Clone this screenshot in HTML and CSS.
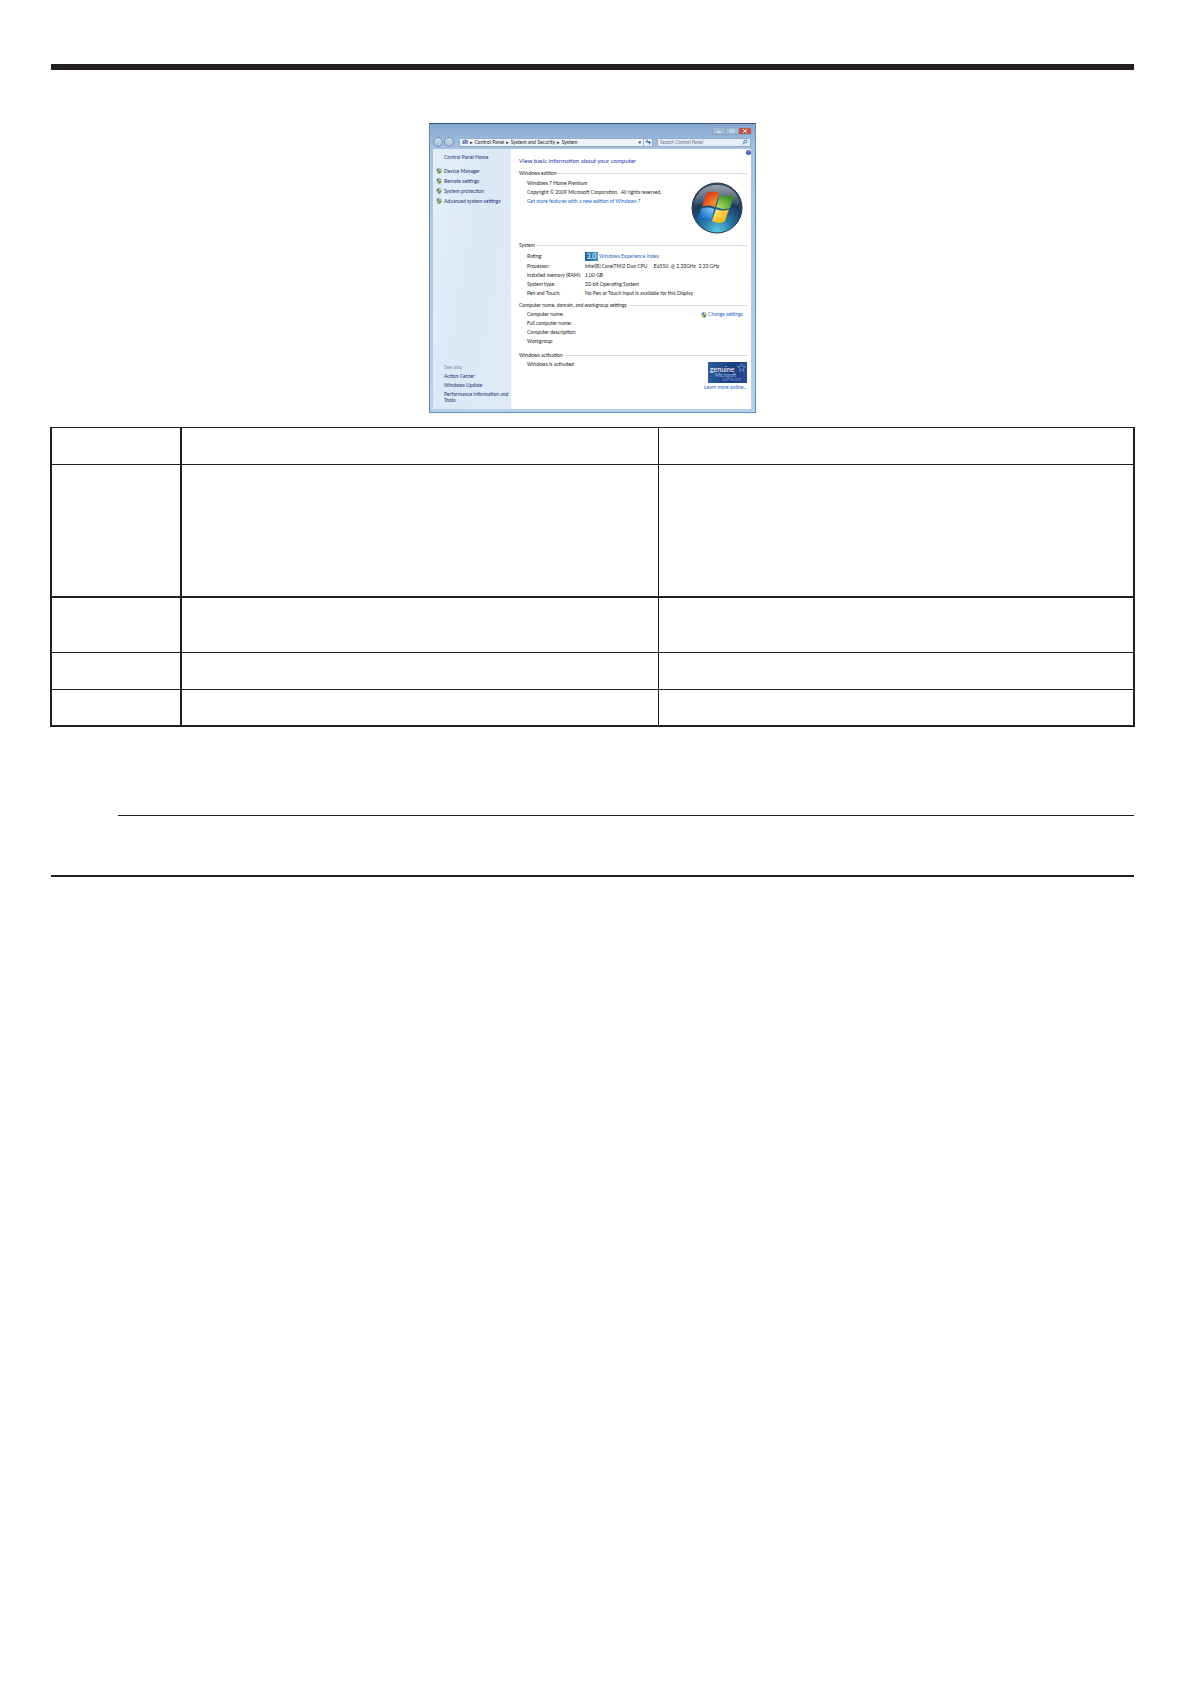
FILE: index.html
```html
<!DOCTYPE html>
<html lang="en">
<head>
<meta charset="utf-8">
<title>System information</title>
<link rel="stylesheet" href="styles.css">
</head>
<body>
<svg class="defs" width="0" height="0" aria-hidden="true">
  <symbol id="shield" viewBox="0 0 12 12">
    <path d="M6 0 11 2v4c0 3-2 5-5 6C3 11 1 9 1 6V2z" fill="#8b9cb0"/>
    <path d="M6 1v5H2V3z" fill="#4c84c8"/><path d="M6 1l4 2v3H6z" fill="#d9cf62"/>
    <path d="M2 6h4v5C3 10 2 8 2 6z" fill="#c6c15a"/><path d="M6 6h4c0 2-1 4-4 5z" fill="#4a8e5a"/>
  </symbol>
</svg>
<main class="page">
  <hr class="rule rule-heavy">
  <section class="window" aria-label="System">
    <div class="titlebar">
      <button class="caption" aria-label="Minimize"><svg viewBox="0 0 12 6"><path d="M4 4h4" stroke="#fff"/></svg></button>
      <button class="caption" aria-label="Maximize"><svg viewBox="0 0 12 6"><path d="M4 2h4v2H4z" fill="none" stroke="#d4e0ee"/></svg></button>
      <button class="caption close" aria-label="Close"><svg viewBox="0 0 12 6"><path d="M4 1l4 4M8 1L4 5" stroke="#f4dcd8"/></svg></button>
    </div>
    <div class="toolbar">
      <button class="nav" aria-label="Back"></button>
      <button class="nav" aria-label="Forward"></button>
      <nav class="address">
        <svg class="pc" viewBox="0 0 12 12"><path d="M1 3l7-2v8l-7 1z" fill="#4c62a0"/><path d="M3 4l4-1v4l-4 1z" fill="#a9c3ea"/><path d="M9 2h2v8H9z" fill="#39437c"/></svg>
        <span class="arrow">▸</span><a href="#">Control Panel</a>
        <span class="arrow">▸</span><a href="#">System and Security</a>
        <span class="arrow">▸</span><a href="#">System</a>
        <span class="drop">▾</span>
        <button class="refresh" aria-label="Refresh"><svg viewBox="0 0 12 12"><path d="M4 1v5M1 4l3 3 3-3M9 11V6M6 8l3-3 3 3" fill="none" stroke="#3268b8" stroke-width="2"/></svg></button>
      </nav>
      <label class="search"><input type="text" placeholder="Search Control Panel" aria-label="Search Control Panel"><svg viewBox="0 0 12 12"><circle cx="7" cy="5" r="3" fill="none" stroke="#3f78b8" stroke-width="2"/><path d="M5 7l-4 4" stroke="#3f78b8" stroke-width="2"/></svg></label>
    </div>
    <div class="body">
      <aside class="side">
        <a class="home" href="#">Control Panel Home</a>
        <ul class="tasks">
          <li><svg><use href="#shield"/></svg><a href="#">Device Manager</a></li>
          <li><svg><use href="#shield"/></svg><a href="#">Remote settings</a></li>
          <li><svg><use href="#shield"/></svg><a href="#">System protection</a></li>
          <li><svg><use href="#shield"/></svg><a href="#">Advanced system settings</a></li>
        </ul>
        <div class="also">
          <span>See also</span>
          <a href="#">Action Center</a>
          <a href="#">Windows Update</a>
          <a class="wrap" href="#">Performance Information and Tools</a>
        </div>
      </aside>
      <div class="content">
        <button class="help" aria-label="Help"><svg viewBox="0 0 12 12"><circle cx="6" cy="6" r="6" fill="#3d51ac"/><path d="M4 5c0-3 4-3 4-1 0 1-2 1-2 3M6 8v2" fill="none" stroke="#dfe6ff" stroke-width="1.5"/></svg></button>
        <h1>View basic information about your computer</h1>
        <section class="group edition">
          <h2>Windows edition</h2>
          <div class="split">
            <div class="lines">
              <p>Windows 7 Home Premium</p>
              <p>Copyright © 2009 Microsoft Corporation.&nbsp; All rights reserved.</p>
              <a href="#">Get more features with a new edition of Windows 7</a>
            </div>
            <svg class="logo" viewBox="0 0 52 52" role="img" aria-label="Windows">
              <defs>
                <radialGradient id="orb" cx=".5" cy=".95" r=".85"><stop offset="0" stop-color="#58c8e0"/><stop offset=".35" stop-color="#2878a4"/><stop offset=".7" stop-color="#1c3c5c"/><stop offset="1" stop-color="#34465c"/></radialGradient>
                <linearGradient id="shine" x2="0" y2="1"><stop offset="0" stop-color="#fff" stop-opacity=".5"/><stop offset="1" stop-color="#fff" stop-opacity=".05"/></linearGradient>
                <radialGradient id="red" cx="1" cy="1" r="1.1"><stop offset="0" stop-color="#ffb43c"/><stop offset="1" stop-color="#dc3c14"/></radialGradient>
                <radialGradient id="green" cx="0" cy="1" r="1.1"><stop offset="0" stop-color="#c8e878"/><stop offset="1" stop-color="#3c9424"/></radialGradient>
                <radialGradient id="blue" cx="1" cy="0" r="1.1"><stop offset="0" stop-color="#90dcff"/><stop offset="1" stop-color="#1668c0"/></radialGradient>
                <radialGradient id="gold" cx="0" cy="0" r="1.1"><stop offset="0" stop-color="#fff08c"/><stop offset="1" stop-color="#f8b814"/></radialGradient>
              </defs>
              <circle cx="26" cy="26" r="25" fill="url(#orb)" stroke="#263a50"/>
              <path d="M3 24C4 10 14 3 26 3s22 7 23 21c-12-5-30-4-46 0z" fill="url(#shine)"/>
              <path d="M15 12c4-3 8-3 13-1l-4 14c-4-2-8-2-13 0z" fill="url(#red)"/>
              <path d="M29 13c5 2 9 2 14 0l-4 13c-5 2-9 1-14-1z" fill="url(#green)"/>
              <path d="M10 27c5-2 9-2 13 0l-3 12c-4-2-8-2-13 0z" fill="url(#blue)"/>
              <path d="M25 27c4 2 9 2 13 0l-4 12c-4 3-8 2-13 0z" fill="url(#gold)"/>
            </svg>
          </div>
        </section>
        <section class="group system">
          <h2>System</h2>
          <dl>
            <dt>Rating:</dt><dd class="rating"><span class="score">3.0</span><a href="#">Windows Experience Index</a></dd>
            <dt>Processor:</dt><dd>Intel(R) Core(TM)2 Duo CPU&nbsp; &nbsp; &nbsp;E6550&nbsp; @ 2.33GHz&nbsp; 2.33 GHz</dd>
            <dt>Installed memory (RAM):</dt><dd>1.00 GB</dd>
            <dt>System type:</dt><dd>32-bit Operating System</dd>
            <dt>Pen and Touch:</dt><dd>No Pen or Touch Input is available for this Display</dd>
          </dl>
        </section>
        <section class="group naming">
          <h2>Computer name, domain, and workgroup settings</h2>
          <div class="split">
            <div class="lines"><p>Computer name:</p><p>Full computer name:</p><p>Computer description:</p><p>Workgroup:</p></div>
            <div class="change"><svg><use href="#shield"/></svg><a href="#">Change settings</a></div>
          </div>
        </section>
        <section class="group">
          <h2>Windows activation</h2>
          <div class="split">
            <div class="lines"><p>Windows is activated</p></div>
            <div class="genuine">
              <div class="badge"><svg viewBox="0 0 12 12"><path d="M6 1l1 3 4 1-3 2 1 4-3-2-3 2 1-4-3-2 4-1z" fill="none" stroke="#7c9cd0"/></svg><b>genuine</b><span>Microsoft</span><span class="dim">software</span></div>
              <a href="#">Learn more online...</a>
            </div>
          </div>
        </section>
      </div>
    </div>
  </section>
  <table class="grid">
    <colgroup><col class="label"><col><col></colgroup>
    <tbody>
      <tr class="short"><td></td><td></td><td></td></tr>
      <tr class="tall"><td></td><td></td><td></td></tr>
      <tr class="medium"><td></td><td></td><td></td></tr>
      <tr class="short"><td></td><td></td><td></td></tr>
      <tr class="short last"><td></td><td></td><td></td></tr>
    </tbody>
  </table>
  <hr class="rule rule-thin">
  <hr class="rule rule-end">
</main>
</body>
</html>
```
FILE: styles.css
```css
* { box-sizing: border-box; }
body { margin: 0; background: #fff; }
.defs { position: absolute; }
.page { padding: 64px 56px 64px 50px; }

/* Rules */
.rule { margin: 0 1px; border: 0; background: #231f20; }
.rule-heavy { height: 6px; }
.rule-thin { height: 1px; margin: 88px 1px 0 68px; }
.rule-end { height: 2px; margin-top: 59px; }

/* Window */
.window {
  width: 327px;
  margin: 53px auto 14px;
  padding: 0 5px 4px 4px;
  background: linear-gradient(#86a8d0, #a9c4e2 26px, #b8d2ec);
  border-top: 1px solid #3f5878;
  box-shadow: inset 1px 0 #6688a8, inset -1px -1px #5f92b8;
  font: 5px/9px Lato, "Open Sans", sans-serif;
  color: #222;
}
.window a { color: #1c62c4; text-decoration: none; white-space: nowrap; }
.window button { display: block; padding: 0; border: 0; background: none; }
.window svg { display: block; flex: none; }
.window p, .window h1, .window h2, .window dl, .window dd, .window ul { margin: 0; padding: 0; }
.titlebar { display: flex; justify-content: flex-end; gap: 1px; height: 13px; padding-top: 4px; }
.window .caption { width: 12px; height: 6px; border-radius: 1px; background: #a0bad6; box-shadow: 0 0 0 1px #88a2c2; }
.window .close { background: #c0584c; }
.toolbar { display: flex; align-items: center; gap: 1px; height: 12px; padding-bottom: 2px; }
.window .nav { width: 10px; height: 10px; border-radius: 50%; border: 1px solid #7894b4; background: linear-gradient(#c8daee, #a8c2de); }
.address { display: flex; align-items: center; flex: 1; gap: 2px; margin-left: 4px; height: 9px; padding-left: 2px; background: #edf3fa; border: 1px solid #94abc6; }
.window .address a { color: #222; }
.pc { width: 6px; height: 6px; }
.arrow, .drop { font-family: "DejaVu Sans", sans-serif; }
.drop { margin-left: auto; }
.window .refresh { width: 9px; height: 7px; border-left: 1px solid #a4b8d0; }
.refresh svg { width: 6px; height: 6px; margin: 0 auto; }
.search { display: flex; align-items: center; width: 94px; height: 9px; padding: 0 2px; margin-left: 3px; border: 1px solid #94abc6; background: #e5eef8; }
.search input { flex: 1; min-width: 0; height: 7px; padding: 0; border: 0; background: none; font: inherit; font-style: italic; outline: 0; }
.search input::placeholder { color: #667484; opacity: 1; }
.search svg { width: 6px; height: 6px; }
.body { display: flex; min-height: 260px; background: #fff; }

/* Task pane */
.side { display: flex; flex-direction: column; width: 78px; padding: 3px 2px 6px 3px; line-height: 10px; background: linear-gradient(100deg, #e4eefa, #dde8f7 50%, #e0ebf8); }
.window .side a { color: #1d2f72; }
.home, .also { padding-left: 8px; }
.tasks { margin: 0; list-style: none; }
.window .tasks { margin-top: 4px; }
.tasks li, .change { display: flex; align-items: center; gap: 1px; }
.window .tasks li { gap: 2px; }
.tasks svg, .change svg { width: 6px; height: 6px; }
.also { display: flex; flex-direction: column; margin-top: auto; line-height: 9px; color: #8290a4; }
.window .also .wrap { margin-top: 1px; line-height: 6px; white-space: normal; }

/* Details pane */
.content { position: relative; flex: 1; padding: 7px 4px 0 8px; }
.window .help { position: absolute; top: 1px; right: 0; width: 5px; height: 5px; }
h1 { font-size: 6px; line-height: 10px; font-weight: 400; color: #2438a4; }
.window h1 { margin-bottom: 3px; }
h2 { display: flex; align-items: center; gap: 1px; font-size: 5px; line-height: 8px; font-weight: 400; }
.window h2 { margin-bottom: 1px; }
h2::after { content: ""; flex: 1; height: 1px; background: #dadde2; }
.edition { min-height: 72px; }
.edition .lines { padding-top: 1px; }
.system { min-height: 60px; }
.naming { min-height: 50px; }
.split { display: flex; justify-content: space-between; align-items: flex-start; }
.lines { display: flex; flex-direction: column; padding-left: 8px; white-space: nowrap; }
.logo { width: 52px; height: 52px; margin: 4px 4px 0 0; }
dl { display: grid; grid-template-columns: 58px 1fr; grid-template-rows: 12px; grid-auto-rows: 9px; align-items: center; white-space: nowrap; }
.window dl { padding-left: 8px; }
.rating { display: flex; align-items: center; gap: 1px; }
.score { width: 13px; height: 9px; background: linear-gradient(90deg, #1c5c9c, #3c9cc8); color: #fff; text-align: center; font-size: 7px; }
.change { padding-right: 4px; }
.genuine { display: flex; flex-direction: column; align-items: flex-end; padding-top: 2px; }
.badge { position: relative; display: flex; flex-direction: column; width: 39px; height: 21px; padding: 4px 2px 0; background: linear-gradient(100deg, #2c609c, #1c3c80 60%, #284c94); color: #a8c4e8; line-height: 4px; }
.badge b { font-size: 7px; line-height: 7px; font-weight: 400; color: #fff; }
.badge span { padding-left: 5px; }
.badge .dim { padding-left: 12px; color: #6d90c4; }
.badge svg { position: absolute; top: 1px; right: 1px; width: 9px; height: 9px; }

/* Ruled table */
.grid { width: 100%; table-layout: fixed; border-spacing: 0; border: solid #231f20; border-width: 1px 0 0 2px; }
.grid .label { width: 130px; }
.grid td { padding: 0; border: solid #231f20; border-width: 0 2px 1px 0; }
.grid td:nth-child(2) { border-right-width: 1px; }
.grid .short td { height: 37px; }
.grid .tall td { height: 133px; border-bottom-width: 2px; }
.grid .medium td { height: 55px; }
.grid .last td { border-bottom-width: 2px; }
```
